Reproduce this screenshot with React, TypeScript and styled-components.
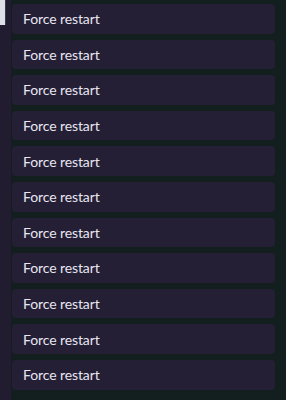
import React from "react";
import styled, { createGlobalStyle } from "styled-components";

const Global = createGlobalStyle`
  html, body { margin: 0; padding: 0; background: #131f1f; }
  body { font-family: Lato, "Noto Sans", sans-serif; overflow: hidden; }
`;

const Page = styled.div`
  display: flex;
  width: 286px;
  height: 400px;
  overflow: hidden;
  background: #131f1f;
`;

const Rail = styled.div`
  width: 11px;
  flex: none;
  background: #211c30;
  display: flex;
  flex-direction: column;
`;

const Thumb = styled.div`
  width: 5px;
  height: 25px;
  background: #dde0e7;
  border-right: 1px solid #3a3a4a;
`;

const List = styled.div`
  flex: 1;
  display: flex;
  flex-direction: column;
  gap: 6px;
  padding: 4px 11px 0 1px;
`;

const Row = styled.div`
  height: 29.6px;
  flex: none;
  box-sizing: border-box;
  display: flex;
  align-items: center;
  padding: 0 11px;
  background: #241f35;
  border-radius: 4px;
  color: #e8e6f0;
  font-size: 14px;
  font-weight: 400;
  letter-spacing: -0.1px;
`;

export default function App() {
  const rows = Array.from({ length: 11 });
  return (
    <>
      <Global />
      <Page>
        <Rail>
          <Thumb />
        </Rail>
        <List>
          {rows.map((_, i) => (
            <Row key={i}>Force restart</Row>
          ))}
        </List>
      </Page>
    </>
  );
}
